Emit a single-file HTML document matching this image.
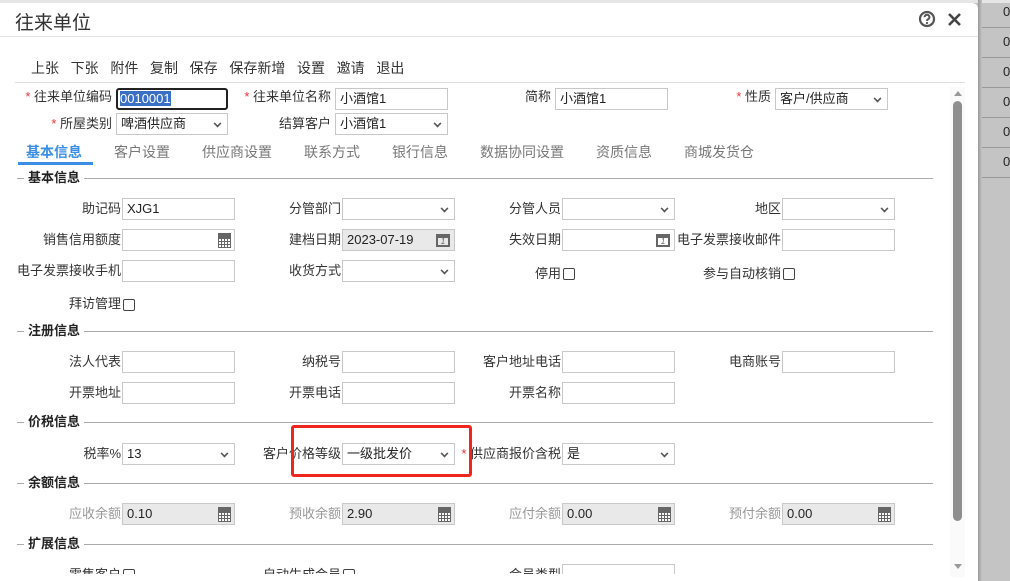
<!DOCTYPE html>
<html><head><meta charset="utf-8"><style>
*{box-sizing:border-box;margin:0;padding:0}
body{width:1010px;height:581px;overflow:hidden;background:#c4c4c4;font-family:"Liberation Sans","Noto Sans CJK SC",sans-serif;font-size:13px;color:#333;position:relative}
.a{position:absolute}
.dlg{left:0;top:3px;width:978px;height:578px;background:#fff;border-top-right-radius:6px;overflow:hidden}
.lb{position:absolute;text-align:right;white-space:nowrap;font-size:13px;color:#333;line-height:22px;height:22px}
.in{position:absolute;border:1px solid #c8c8c8;background:#fff;height:22px;line-height:20px;padding-left:4px;font-size:13px;color:#222;width:113px}
.dis{background:#e9e9e9}
.st{color:#e33}
.chev{position:absolute;right:6px;top:6px;width:7px;height:7px;border-right:2px solid #555;border-bottom:2px solid #555;transform:rotate(45deg) scale(.8)}
.calc{position:absolute;right:3px;top:3px;width:13px;height:15px;border:1.5px solid #666;background:
 linear-gradient(#666,#666) 0 0/100% 4px no-repeat,
 repeating-linear-gradient(90deg,transparent 0 2px,#666 2px 3px),
 repeating-linear-gradient(0deg,#fff 0 2px,#666 2px 3px)}
.cal{position:absolute;right:4px;top:4px;width:14px;height:13px;border:2px solid #666;border-top-width:4px;font-size:8px;line-height:8px;text-align:center;color:#666}
.cb{position:absolute;width:12px;height:12px;border:1px solid #444;border-radius:2px;background:#fff}
.sec{position:absolute;left:17px;width:916px;height:1px;background:#aaa}
.sec span{position:absolute;left:7px;top:-9px;background:#fff;padding:0 4px;font-weight:bold;font-size:13px;line-height:17px;color:#222}
.grey{color:#999}
</style></head><body>
<div class="a" style="left:0;top:0;width:1010px;height:3px;background:#e6e6e6"></div>
<div class="a" style="left:1003px;top:4px;font-size:13px;line-height:15px;color:#222">0<br><br>0<br><br>0<br><br>0<br><br>0<br><br>0</div>
<div class="a" style="left:978px;top:27px;width:32px;height:1px;background:#999"></div>
<div class="a" style="left:978px;top:57px;width:32px;height:1px;background:#999"></div>
<div class="a" style="left:978px;top:87px;width:32px;height:1px;background:#999"></div>
<div class="a" style="left:978px;top:117px;width:32px;height:1px;background:#999"></div>
<div class="a" style="left:978px;top:147px;width:32px;height:1px;background:#999"></div>
<div class="a" style="left:978px;top:177px;width:32px;height:1px;background:#999"></div>
<div class="a" style="left:978px;top:0;width:4px;height:581px;background:linear-gradient(90deg,#999,#c4c4c4)"></div>

<div class="a dlg">
 <div class="a" style="left:15px;top:5px;font-size:19px;color:#333">往来单位</div>
 <svg class="a" style="left:918px;top:7px" width="18" height="18" viewBox="0 0 18 18"><circle cx="9" cy="9" r="7" fill="none" stroke="#555" stroke-width="2.2"/><path d="M6.6 7.2a2.4 2.4 0 1 1 3.4 2.1c-.8.4-1 .8-1 1.6" fill="none" stroke="#555" stroke-width="2"/><circle cx="9" cy="13" r="1.1" fill="#555"/></svg>
 <svg class="a" style="left:947px;top:9px" width="15" height="15" viewBox="0 0 15 15"><path d="M2 2L13 13M13 2L2 13" stroke="#444" stroke-width="2.6"/></svg>
 <div class="a" style="left:0;top:33px;width:978px;height:1px;background:#e4e4e4"></div>
 <div class="a" style="left:31px;top:55px;font-size:14px;white-space:nowrap;color:#333">上张&nbsp;&nbsp;&nbsp;下张&nbsp;&nbsp;&nbsp;附件&nbsp;&nbsp;&nbsp;复制&nbsp;&nbsp;&nbsp;保存&nbsp;&nbsp;&nbsp;保存新增&nbsp;&nbsp;&nbsp;设置&nbsp;&nbsp;&nbsp;邀请&nbsp;&nbsp;&nbsp;退出</div>
 <div class="a" style="left:15px;top:79px;width:950px;height:1px;background:#e0e0e0"></div>

 <div class="lb" style="left:0;width:112px;top:83px"><span class="st">* </span>往来单位编码</div>
 <div class="in" style="left:116px;top:85px;width:112px;border:2px solid #222;border-radius:3px;padding-left:2px;line-height:18px"><span style="background:#3a6fc6;color:#fff">0010001</span></div>
 <div class="lb" style="left:230px;width:101px;top:83px"><span class="st">* </span>往来单位名称</div>
 <div class="in" style="left:335px;top:85px;width:113px">小酒馆1</div>
 <div class="lb" style="left:500px;width:51px;top:83px">简称</div>
 <div class="in" style="left:555px;top:85px;width:113px">小酒馆1</div>
 <div class="lb" style="left:700px;width:71px;top:83px"><span class="st">* </span>性质</div>
 <div class="in" style="left:775px;top:85px;width:113px">客户/供应商<i class="chev"></i></div>

 <div class="lb" style="left:0;width:112px;top:110px"><span class="st">* </span>所屋类别</div>
 <div class="in" style="left:116px;top:110px;width:112px">啤酒供应商<i class="chev"></i></div>
 <div class="lb" style="left:230px;width:101px;top:110px">结算客户</div>
 <div class="in" style="left:335px;top:110px;width:113px">小酒馆1<i class="chev"></i></div>

 <div class="a" style="left:26px;top:139px;font-size:14px;font-weight:bold;color:#3a8ee6">基本信息</div>
 <div class="a" style="left:18px;top:159px;width:75px;height:3px;background:#3a8ee6"></div>
 <div class="a" style="left:114px;top:139px;font-size:14px;color:#777;white-space:nowrap">客户设置</div>
 <div class="a" style="left:202px;top:139px;font-size:14px;color:#777">供应商设置</div>
 <div class="a" style="left:304px;top:139px;font-size:14px;color:#777">联系方式</div>
 <div class="a" style="left:392px;top:139px;font-size:14px;color:#777">银行信息</div>
 <div class="a" style="left:480px;top:139px;font-size:14px;color:#777">数据协同设置</div>
 <div class="a" style="left:596px;top:139px;font-size:14px;color:#777">资质信息</div>
 <div class="a" style="left:684px;top:139px;font-size:14px;color:#777">商城发货仓</div>

 <div class="a" style="left:950px;top:84px;width:15px;height:490px;background:#fafafa"></div>
 <div class="a" style="left:954px;top:88px;width:0;height:0;border:4px solid transparent;border-bottom:5px solid #999;border-top:0"></div>
 <div class="a" style="left:953px;top:98px;width:9px;height:420px;background:#8e8e8e;border-radius:5px"></div>
 <div class="a" style="left:954px;top:561px;width:0;height:0;border:4px solid transparent;border-top:5px solid #999;border-bottom:0"></div>

 <div class="a" style="left:0;top:0;width:950px;height:571px;overflow:hidden">
  <div class="sec" style="top:175px"><span>基本信息</span></div>
  <div class="lb" style="left:0;width:121px;top:195px">助记码</div><div class="in" style="left:122px;top:195px">XJG1</div>
  <div class="lb" style="left:230px;width:111px;top:195px">分管部门</div><div class="in" style="left:342px;top:195px"><i class="chev"></i></div>
  <div class="lb" style="left:450px;width:111px;top:195px">分管人员</div><div class="in" style="left:562px;top:195px"><i class="chev"></i></div>
  <div class="lb" style="left:670px;width:111px;top:195px">地区</div><div class="in" style="left:782px;top:195px"><i class="chev"></i></div>

  <div class="lb" style="left:0;width:121px;top:226px">销售信用额度</div><div class="in" style="left:122px;top:226px"><i class="calc"></i></div>
  <div class="lb" style="left:230px;width:111px;top:226px">建档日期</div><div class="in dis" style="left:342px;top:226px">2023-07-19<i class="cal">1</i></div>
  <div class="lb" style="left:450px;width:111px;top:226px">失效日期</div><div class="in" style="left:562px;top:226px"><i class="cal">1</i></div>
  <div class="lb" style="left:670px;width:111px;top:226px">电子发票接收邮件</div><div class="in" style="left:782px;top:226px"></div>

  <div class="lb" style="left:0;width:121px;top:257px">电子发票接收手机</div><div class="in" style="left:122px;top:257px"></div>
  <div class="lb" style="left:230px;width:111px;top:257px">收货方式</div><div class="in" style="left:342px;top:257px"><i class="chev"></i></div>
  <div class="lb" style="left:450px;width:111px;top:260px">停用</div><div class="cb" style="left:563px;top:265px"></div>
  <div class="lb" style="left:670px;width:111px;top:260px">参与自动核销</div><div class="cb" style="left:783px;top:265px"></div>
  <div class="lb" style="left:0;width:121px;top:290px">拜访管理</div><div class="cb" style="left:123px;top:296px"></div>

  <div class="sec" style="top:328px"><span>注册信息</span></div>
  <div class="lb" style="left:0;width:121px;top:348px">法人代表</div><div class="in" style="left:122px;top:348px"></div>
  <div class="lb" style="left:230px;width:111px;top:348px">纳税号</div><div class="in" style="left:342px;top:348px"></div>
  <div class="lb" style="left:450px;width:111px;top:348px">客户地址电话</div><div class="in" style="left:562px;top:348px"></div>
  <div class="lb" style="left:670px;width:111px;top:348px">电商账号</div><div class="in" style="left:782px;top:348px"></div>
  <div class="lb" style="left:0;width:121px;top:379px">开票地址</div><div class="in" style="left:122px;top:379px"></div>
  <div class="lb" style="left:230px;width:111px;top:379px">开票电话</div><div class="in" style="left:342px;top:379px"></div>
  <div class="lb" style="left:450px;width:111px;top:379px">开票名称</div><div class="in" style="left:562px;top:379px"></div>

  <div class="sec" style="top:419px"><span>价税信息</span></div>
  <div class="lb" style="left:0;width:121px;top:440px">税率%</div><div class="in" style="left:122px;top:440px">13<i class="chev"></i></div>
  <div class="lb" style="left:230px;width:111px;top:440px">客户价格等级</div><div class="in" style="left:342px;top:440px">一级批发价<i class="chev"></i></div>
  <div class="lb" style="left:450px;width:111px;top:440px"><span class="st">* </span>供应商报价含税</div><div class="in" style="left:562px;top:440px">是<i class="chev"></i></div>
  <div class="a" style="left:291px;top:422px;width:181px;height:52px;border:3px solid #f0261e;border-radius:3px"></div>

  <div class="sec" style="top:480px"><span>余额信息</span></div>
  <div class="lb grey" style="left:0;width:121px;top:500px">应收余额</div><div class="in dis" style="left:122px;top:500px">0.10<i class="calc"></i></div>
  <div class="lb grey" style="left:230px;width:111px;top:500px">预收余额</div><div class="in dis" style="left:342px;top:500px">2.90<i class="calc"></i></div>
  <div class="lb grey" style="left:450px;width:111px;top:500px">应付余额</div><div class="in dis" style="left:562px;top:500px">0.00<i class="calc"></i></div>
  <div class="lb grey" style="left:670px;width:111px;top:500px">预付余额</div><div class="in dis" style="left:782px;top:500px">0.00<i class="calc"></i></div>

  <div class="sec" style="top:541px"><span>扩展信息</span></div>
  <div class="lb" style="left:0;width:121px;top:561px">零售客户</div><div class="cb" style="left:123px;top:566px"></div>
  <div class="lb" style="left:230px;width:111px;top:561px">自动生成会员</div><div class="cb" style="left:343px;top:566px"></div>
  <div class="lb" style="left:450px;width:111px;top:561px">会员类型</div><div class="in" style="left:562px;top:561px"></div>
 </div>
</div>
</body></html>
